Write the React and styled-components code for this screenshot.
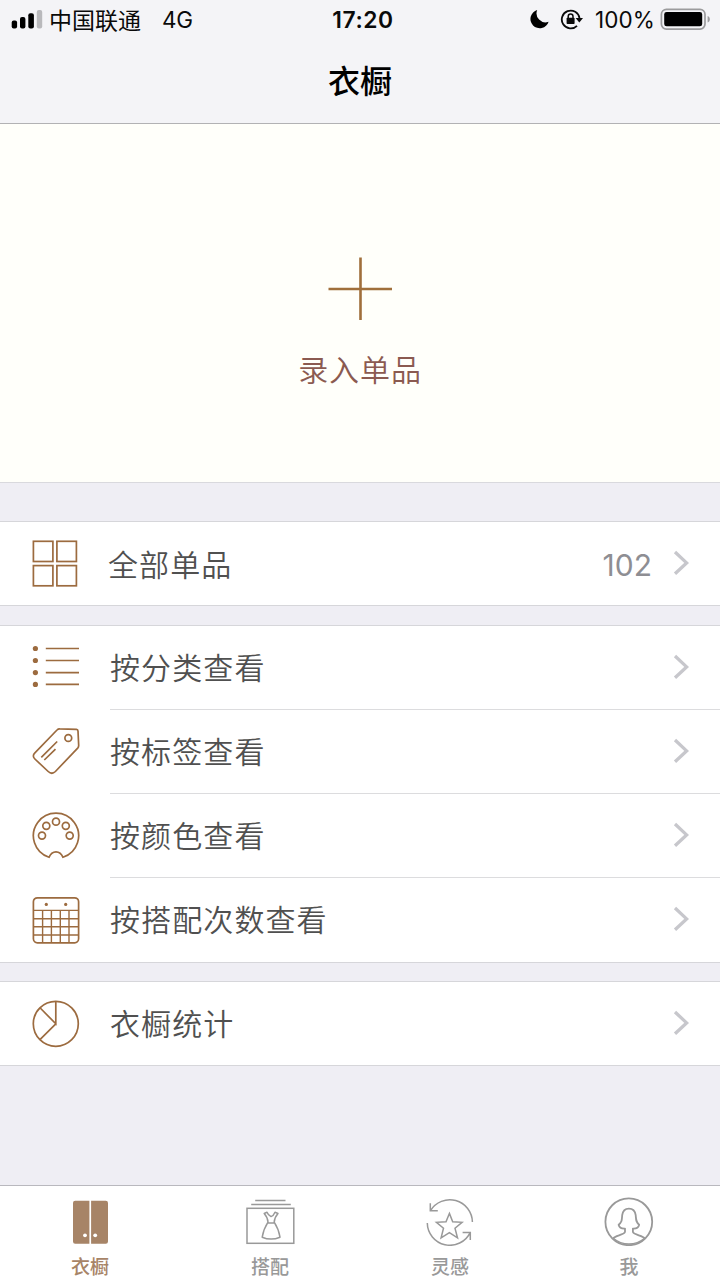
import styled, { createGlobalStyle } from "styled-components";

const GlobalStyle = createGlobalStyle`
  * {
    box-sizing: border-box;
  }

  body {
    margin: 0;
    background: #efeef4;
    font-family: Inter, "Noto Sans CJK SC", sans-serif;
  }
`;

const Screen = styled.div`
  display: flex;
  flex-direction: column;
  width: 720px;
  height: 1280px;
  overflow: hidden;
  background: #efeef4;
`;

const Header = styled.header`
  height: 124px;
  background: #f4f4f7;
  border-bottom: 1px solid #b2b2b4;
`;

const StatusBar = styled.div`
  display: grid;
  grid-template-columns: 1fr auto 1fr;
  align-items: center;
  height: 40px;
  padding: 0 9px 0 11px;
  font-size: 22.5px;
  line-height: 40px;
  color: #0a0a0a;
  white-space: nowrap;
`;

const StatusGroup = styled.div`
  display: flex;
  align-items: center;
  height: 40px;
  justify-content: ${(props) => (props.$end ? "flex-end" : "flex-start")};
`;

const Carrier = styled.span`
  margin-left: 6px;
  padding-top: 1px;
  font-size: 23px;
`;

const Network = styled.span`
  margin-left: 21px;
  letter-spacing: -0.3px;
`;

const Clock = styled.span`
  padding-left: 4px;
  font-size: 22.8px;
  font-weight: 600;
  letter-spacing: 0.6px;
`;

const Percent = styled.span`
  margin: 0 5px 0 11px;
  letter-spacing: 0.1px;
`;

const Title = styled.h1`
  margin: 0;
  padding-top: 2px;
  font-size: 32px;
  font-weight: 500;
  line-height: 80px;
  text-align: center;
  color: #000;
`;

const AddPanel = styled.button`
  display: flex;
  flex-direction: column;
  align-items: center;
  height: 359px;
  padding: 133px 0 0;
  border: none;
  border-bottom: 1px solid #d9d9dd;
  background: #fffffa;
  font-family: inherit;
`;

const AddLabel = styled.span`
  margin-top: 27px;
  font-size: 30px;
  font-weight: 350;
  line-height: 44px;
  letter-spacing: 0.9px;
  color: #8b5a50;
`;

const Group = styled.section`
  margin-top: ${(props) => props.$gap}px;
  border-top: 1px solid #d6d6da;
  border-bottom: 1px solid #d6d6da;
  background: #fff;
`;

const Row = styled.div`
  display: flex;
  align-items: center;
  height: 83px;
  padding-left: 30px;
`;

const Divider = styled.div`
  height: 1px;
  margin-left: 110px;
  background: ${(props) => (props.$last ? "transparent" : "#dcdcde")};
`;

const Label = styled.span`
  flex: 1;
  margin-left: ${(props) => (props.$tight ? 27 : 29)}px;
  padding-top: ${(props) => (props.$tight ? 3 : 1)}px;
  font-size: 30px;
  font-weight: 350;
  line-height: 44px;
  letter-spacing: 1.1px;
  color: #505050;
`;

const Count = styled.span`
  margin-right: 20px;
  padding-top: 3px;
  font-size: 30px;
  line-height: 40px;
  color: #8e8e93;
`;

const TabBar = styled.nav`
  display: grid;
  grid-template-columns: 180px 180px 180px 178px;
  height: 95px;
  margin-top: auto;
  border-top: 1px solid #b9b8be;
  background: #fff;
`;

const Tab = styled.div`
  display: flex;
  flex-direction: column;
  align-items: center;
  padding-top: 10px;
  font-size: 19px;
  font-weight: 500;
  line-height: 28px;
  color: ${(props) => (props.$active ? "#a78467" : "#999")};
`;

const TabLabel = styled.span`
  margin-top: 8px;
`;

const RowSvg = styled.svg`
  flex: none;
  width: 51px;
  height: 51px;
  fill: none;
  stroke: #9c6b3f;
  stroke-width: 1.7;
`;

const TabSvg = styled.svg`
  width: 50px;
  height: 50px;
  fill: none;
  stroke: currentColor;
  stroke-width: 1.5;
`;

const ChevronSvg = styled.svg`
  flex: none;
  width: 18px;
  height: 28px;
  margin-right: 30px;
  fill: none;
  stroke: #c7c7cc;
  stroke-width: 3.3;
`;

const LockSvg = styled.svg`
  width: 24px;
  height: 22px;
  margin-left: 10px;
  fill: none;
  stroke: #0a0a0a;
  stroke-width: 1.8;
`;

function Signal() {
  return (
    <svg width="32" height="20" viewBox="0 0 32 20">
      <rect x="0.7" y="10.6" width="5.4" height="8" rx="2" />
      <rect x="9" y="6.9" width="5.4" height="11.7" rx="2" />
      <rect x="17.3" y="3.3" width="5.6" height="15.3" rx="2" />
      <rect x="25.8" y="0" width="5.4" height="18.6" rx="2" fill="#b9b9bc" />
    </svg>
  );
}

function Moon() {
  return (
    <svg width="20" height="20" viewBox="0 0 20 20">
      <path d="M7.2 0A9.3 9.3 0 1 0 18.6 11.8 9 9 0 0 1 7.2 0Z" />
    </svg>
  );
}

function RotationLock() {
  return (
    <LockSvg viewBox="0 0 24 22">
      <path d="M17 16.8A8.9 8.9 0 1 1 19.5 9.2" />
      <path d="M15.6 9H23L19.3 13.4Z" fill="#0a0a0a" stroke="none" />
      <rect x="6.6" y="8.8" width="8" height="6.2" rx="0.8" fill="#0a0a0a" stroke="none" />
      <path d="M8.2 9.4V7.4a2.4 2.4 0 0 1 4.8 0V9.4" strokeWidth="1.5" />
    </LockSvg>
  );
}

function Battery() {
  return (
    <svg width="51" height="24" viewBox="0 0 51 24">
      <rect x="1.4" y="1.3" width="43.6" height="19.8" rx="5" fill="none" stroke="#9b9b9d" strokeWidth="1.7" />
      <rect x="4.2" y="4.1" width="38" height="14.2" rx="2.4" />
      <path d="M47.6 8.1c3 .8 3 5.6 0 6.4Z" fill="#9b9b9d" />
    </svg>
  );
}

function Plus() {
  return (
    <svg width="66" height="64" viewBox="0 0 66 64" stroke="#a06f3b" strokeWidth="2.6">
      <path d="M33.5 .5V63M1.5 32H65" />
    </svg>
  );
}

function Chevron() {
  return (
    <ChevronSvg viewBox="0 0 18 28">
      <path d="M3 2 14.6 12.9 3 23.8" />
    </ChevronSvg>
  );
}

function GridIcon() {
  return (
    <RowSvg viewBox="0 0 51 51">
      <rect x="3.4" y="3.3" width="19.5" height="20.2" />
      <rect x="26.9" y="3.3" width="19.5" height="20.2" />
      <rect x="3.4" y="27.6" width="19.5" height="20.2" />
      <rect x="26.9" y="27.6" width="19.5" height="20.2" />
    </RowSvg>
  );
}

function ListIcon() {
  return (
    <RowSvg viewBox="0 0 51 51">
      {[6.5, 18.5, 30.6, 42.4].map((y) => (
        <g key={y}>
          <circle cx="5.4" cy={y} r="2.6" fill="#9c6b3f" stroke="none" />
          <path d={`M15.8 ${y}H49`} />
        </g>
      ))}
    </RowSvg>
  );
}

function TagIcon() {
  return (
    <RowSvg viewBox="0 0 51 51" strokeLinejoin="round">
      <path d="M29.8 2.8 46.5 3.4Q47.9 3.5 48 5L48.7 19.5Q48.7 21 47.7 22.1L25.4 45.5Q21.8 49 18.2 45.5L4.9 33Q1.8 30 4.9 26.9L27 4Q28.2 2.7 29.8 2.8Z" />
      <circle cx="38.3" cy="12" r="3.4" />
      <path d="M11.3 31.3 27.2 15.5M14.3 34 25.5 23.2" />
    </RowSvg>
  );
}

function PaletteIcon() {
  return (
    <RowSvg viewBox="0 0 51 51">
      <path d="M19 47.3A22.6 22.6 0 1 1 33 47.3C31.5 43.7 29.2 41.8 26 41.8S20.5 43.7 19 47.3Z" />
      <circle cx="12" cy="25.6" r="3.5" />
      <circle cx="16.3" cy="15.8" r="3.5" />
      <circle cx="26" cy="11.7" r="3.5" />
      <circle cx="35.8" cy="15.8" r="3.5" />
      <circle cx="39.7" cy="25.6" r="3.5" />
    </RowSvg>
  );
}

function CalendarIcon() {
  return (
    <RowSvg viewBox="0 0 51 51">
      <rect x="3.4" y="3.8" width="45.2" height="45" rx="4" />
      <path
        d="M3.4 16.4H48.6M3.4 24.7H48.6M3.4 32.8H48.6M3.4 41H48.6M12.6 16.4V48.8M21.4 16.4V48.8M30.3 16.4V48.8M39 16.4V48.8"
        strokeWidth="1.4"
      />
      <circle cx="16.3" cy="10.4" r="1.6" fill="#9c6b3f" stroke="none" />
      <circle cx="35.7" cy="10.4" r="1.6" fill="#9c6b3f" stroke="none" />
    </RowSvg>
  );
}

function PieIcon() {
  return (
    <RowSvg viewBox="0 0 51 51">
      <circle cx="25.8" cy="25.8" r="22.5" />
      <path d="M25.8 3.3V25.8L10.2 10M25.8 25.8 10.2 41.4" />
    </RowSvg>
  );
}

function WardrobeIcon() {
  return (
    <TabSvg viewBox="0 0 50 50">
      <path
        d="M10.2 4.8H24.4V47.7H10.2Q8 47.7 8 45.5V7Q8 4.8 10.2 4.8ZM26.1 4.8H40.8Q43 4.8 43 7V45.5Q43 47.7 40.8 47.7H26.1Z"
        fill="currentColor"
        stroke="none"
      />
      <circle cx="20" cy="39.3" r="1.9" fill="#fff" stroke="none" />
      <circle cx="30.2" cy="39.3" r="1.9" fill="#fff" stroke="none" />
    </TabSvg>
  );
}

function OutfitIcon() {
  return (
    <TabSvg viewBox="0 0 50 50">
      <path d="M10.2 4.6H40.5M6.2 8.5H45.8" />
      <rect x="2" y="12.3" width="46.8" height="35" />
      <path
        d="M22 16.2 19.2 17.5Q22.8 21.5 23 26.2Q18.6 33 17.2 41.2Q26 45 35 41.2Q33.6 33 29.2 26.2Q29.4 21.5 33 17.5L30 16.2Q28.6 19.6 26 20.6Q23.2 19.2 22 16.2ZM23 26.9H29.2"
        strokeLinejoin="round"
      />
    </TabSvg>
  );
}

function InspirationIcon() {
  return (
    <TabSvg viewBox="0 0 50 50">
      <path d="M5.5 14.6A22.6 22.6 0 0 1 47.4 26M5.3 7.2V14.8H12.8" />
      <path d="M2.3 27A22.6 22.6 0 0 0 45.2 36.6M45.3 44V36.4H37.6" />
      <path d="M24.4 17.4 27.7 25.7 37.1 26.3 30 32.3 32.5 41.8 24.4 36.6 16.1 41.8 18.5 32.3 11.4 26.3 21 25.7Z" />
    </TabSvg>
  );
}

function ProfileIcon() {
  return (
    <TabSvg viewBox="0 0 50 50">
      <circle cx="24.8" cy="25.8" r="23.4" strokeWidth="1.8" />
      <path
        d="M9.3 42.2C11 39.5 21 38.8 21 35.8V32.6C18 32.8 15.3 31.4 14.6 28.7C18 26.3 17.8 24 18.2 19.2C18.8 14.8 21.2 12.6 24.9 12.6S31.1 14.8 31.7 19.2C32.1 24 31.9 26.3 35.2 28.7C34.5 31.4 31.8 32.8 28.9 32.6V35.8C28.9 38.8 38.9 39.5 40.6 42.2"
        strokeLinejoin="round"
        strokeWidth="1.8"
      />
      <path d="M9.3 42.2Q16 48 24.9 48T40.6 42.2" />
    </TabSvg>
  );
}

const filters = [
  { label: "按分类查看", Icon: ListIcon },
  { label: "按标签查看", Icon: TagIcon },
  { label: "按颜色查看", Icon: PaletteIcon },
  { label: "按搭配次数查看", Icon: CalendarIcon },
];

const tabs = [
  { label: "衣橱", Icon: WardrobeIcon, active: true },
  { label: "搭配", Icon: OutfitIcon },
  { label: "灵感", Icon: InspirationIcon },
  { label: "我", Icon: ProfileIcon },
];

function App() {
  return (
    <>
      <GlobalStyle />
      <Screen>
        <Header>
          <StatusBar>
            <StatusGroup>
              <Signal />
              <Carrier>中国联通</Carrier>
              <Network>4G</Network>
            </StatusGroup>
            <Clock>17:20</Clock>
            <StatusGroup $end>
              <Moon />
              <RotationLock />
              <Percent>100%</Percent>
              <Battery />
            </StatusGroup>
          </StatusBar>
          <Title>衣橱</Title>
        </Header>

        <AddPanel>
          <Plus />
          <AddLabel>录入单品</AddLabel>
        </AddPanel>

        <Group $gap={38}>
          <Row>
            <GridIcon />
            <Label $tight>全部单品</Label>
            <Count>102</Count>
            <Chevron />
          </Row>
        </Group>

        <Group $gap={19}>
          {filters.map(({ label, Icon }, i) => (
            <div key={label}>
              <Row>
                <Icon />
                <Label>{label}</Label>
                <Chevron />
              </Row>
              <Divider $last={i === filters.length - 1} />
            </div>
          ))}
        </Group>

        <Group $gap={18}>
          <Row>
            <PieIcon />
            <Label>衣橱统计</Label>
            <Chevron />
          </Row>
        </Group>

        <TabBar>
          {tabs.map(({ label, Icon, active }) => (
            <Tab key={label} $active={active}>
              <Icon />
              <TabLabel>{label}</TabLabel>
            </Tab>
          ))}
        </TabBar>
      </Screen>
    </>
  );
}

export default App;
